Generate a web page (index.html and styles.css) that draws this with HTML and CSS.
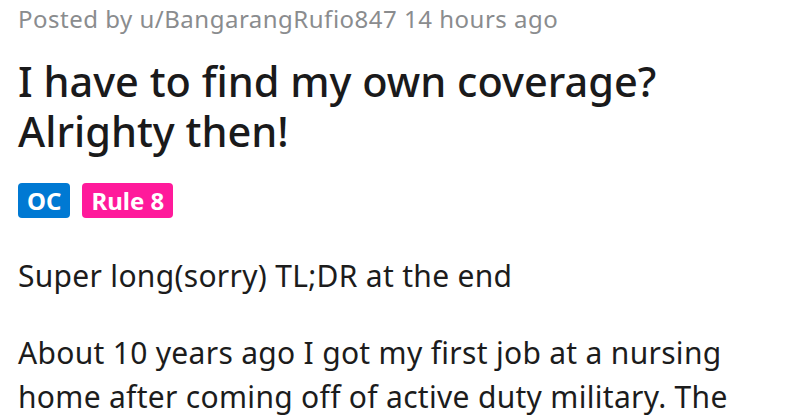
FILE: index.html
```html
<!DOCTYPE html>
<html>
<head>
<meta charset="utf-8">
<link rel="stylesheet" href="styles.css">
</head>
<body>
<div class="post">
  <div class="meta">Posted by u/BangarangRufio847 14 hours ago</div>
  <h1 class="title">I have to find my own coverage? Alrighty then!</h1>
  <div class="flairs">
    <span class="flair oc">OC</span>
    <span class="flair rule">Rule 8</span>
  </div>
  <div class="body">
    <p>Super long(sorry) TL;DR at the end</p>
    <p>About 10 years ago I got my first job at a nursing home after coming off of active duty military. The</p>
  </div>
</div>
</body>
</html>
```
FILE: styles.css
```css
html, body {
  margin: 0;
  padding: 0;
  background: #ffffff;
  overflow: hidden;
}
.post {
  padding: 3px 0 0 18px;
  width: 760px;
}
.meta {
  font-family: "Noto Sans", sans-serif;
  font-size: 24px;
  letter-spacing: 0.5px;
  color: #8a8c8e;
  line-height: 32px;
}
.title {
  font-family: "Noto Sans", sans-serif;
  font-weight: 500;
  font-size: 41.5px;
  line-height: 50px;
  color: #1a1a1b;
  margin: 21px 0 0 0;
  width: 680px;
}
.flairs {
  display: flex;
  gap: 12px;
  margin-top: 27px;
}
.flair {
  font-family: "Noto Sans", sans-serif;
  font-weight: 700;
  font-size: 24px;
  color: #ffffff;
  border-radius: 4px;
  padding: 0 9px;
  height: 35px;
  line-height: 35px;
}
.oc { background: #0079d3; }
.rule { background: #ff1a9b; }
.body {
  font-family: "Noto Sans", sans-serif;
  font-size: 30px;
  letter-spacing: 0.3px;
  color: #1c1c1c;
  line-height: 44px;
  width: 740px;
}
.body p { margin: 0; }
.body p:first-child { margin-top: 36px; margin-bottom: 33px; }
```
